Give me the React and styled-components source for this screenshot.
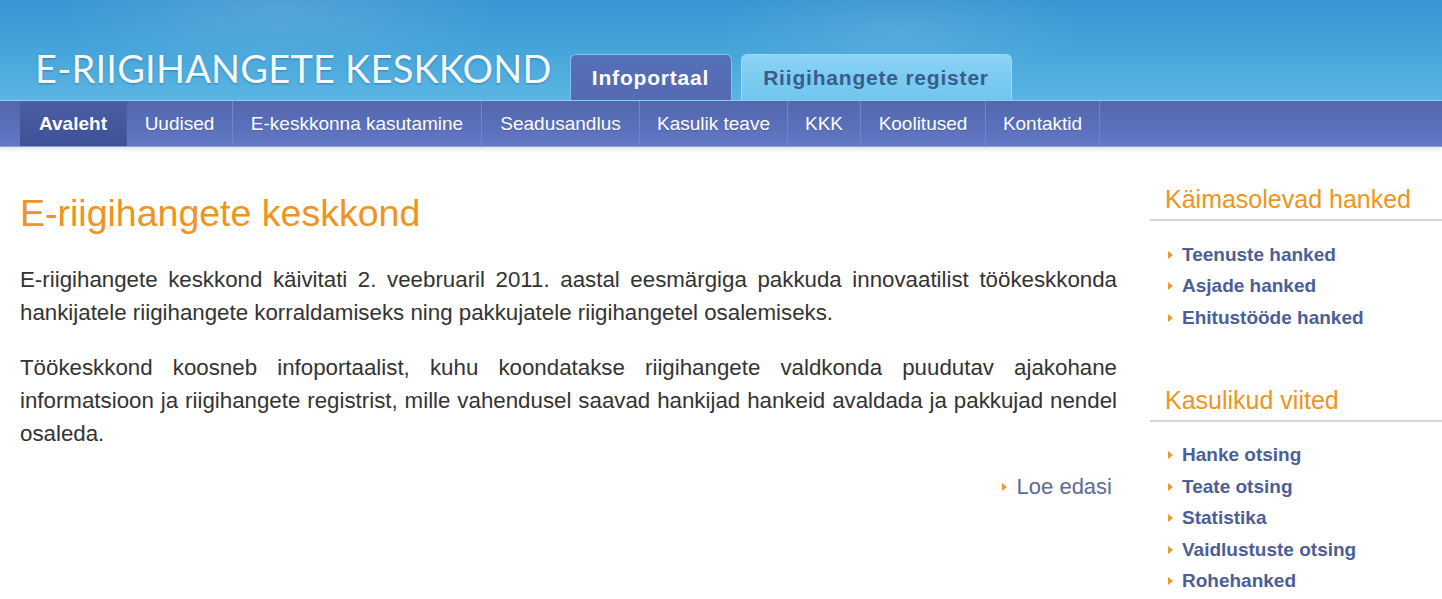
import React from 'react';
import styled, { createGlobalStyle } from 'styled-components';

const GlobalStyle = createGlobalStyle`
    html, body {
        margin: 0;
        padding: 0;
        background: #fff;
        font-family: "Liberation Sans", Arial, sans-serif;
    }
`;

const Page = styled.div`
    width: 1442px;
    height: 599px;
    overflow: hidden;
`;

const Header = styled.div`
    height: 100px;
    display: flex;
    align-items: flex-end;
    padding-left: 35px;
    background:
        radial-gradient(ellipse 320px 90px at 280px 10px, rgba(255,255,255,0.12), transparent 70%),
        radial-gradient(ellipse 260px 80px at 900px 30px, rgba(255,255,255,0.10), transparent 70%),
        linear-gradient(to bottom, #3a95d2 0%, #47a6db 55%, #5cb6e4 100%);
    border-bottom: 1px solid #8fd0f2;
`;

const Logo = styled.div`
    font-family: Lato, "Open Sans", sans-serif;
    font-size: 38px;
    color: #f4f9fd;
    letter-spacing: 0.2px;
    line-height: 1;
    padding-bottom: 13px;
    margin-right: 18px;
    text-shadow: 0 1px 2px rgba(0, 50, 100, 0.35);
    white-space: nowrap;
`;

const Tabs = styled.div`
    display: flex;
    gap: 9px;
    align-self: flex-end;
`;

const Tab = styled.div`
    height: 46px;
    box-sizing: border-box;
    display: flex;
    align-items: center;
    justify-content: center;
    font-size: 21px;
    font-weight: bold;
    letter-spacing: 0.8px;
    border-radius: 6px 6px 0 0;
    color: ${p => (p.active ? '#ffffff' : '#3b5b8c')};
    background: ${p => (p.active
        ? 'linear-gradient(to bottom, #5470b6, #5669b2)'
        : 'linear-gradient(to bottom, #8ad3f4, #70c5ee)')};
    border: 1px solid ${p => (p.active ? '#7fc4ec' : '#9ddaf6')};
    border-bottom: none;
    width: ${p => (p.active ? '162px' : '271px')};
`;

const Nav = styled.div`
    height: 45px;
    display: flex;
    padding-left: 20px;
    background: linear-gradient(to bottom, #5367ad 0%, #5a70bb 60%, #6379c6 100%);
    border-bottom: 1px solid #8a9bd4;
    box-shadow: 0 3px 4px rgba(120, 140, 160, 0.18);
`;

const NavItem = styled.div`
    display: flex;
    align-items: center;
    justify-content: center;
    width: ${p => p.w}px;
    box-sizing: border-box;
    font-size: 19px;
    font-weight: ${p => (p.active ? 'bold' : 'normal')};
    color: #fff;
    border-right: 1px solid ${p => (p.active ? '#4a5c9e' : '#7486c8')};
    background: ${p => (p.active ? 'linear-gradient(to bottom, #4a5ea6, #3f5196)' : 'transparent')};
    text-shadow: 0 1px 0 rgba(30, 40, 90, 0.25);
`;

const Body = styled.div`
    display: flex;
    padding-top: 40px;
`;

const Main = styled.div`
    width: 1097px;
    padding-left: 20px;
    flex-shrink: 0;
`;

const Title = styled.h1`
    margin: 0 0 24px;
    font-size: 37.5px;
    font-weight: normal;
    color: #ef9420;
    line-height: 52px;
`;

const Para = styled.p`
    margin: 0 0 21px;
    font-size: 22.3px;
    line-height: 33.3px;
    color: #333;
    text-align: justify;
`;

const MoreRow = styled.div`
    display: flex;
    justify-content: flex-end;
    padding-right: 5px;
    margin-top: 24px;
`;

const MoreLink = styled.a`
    display: flex;
    align-items: center;
    gap: 10px;
    font-size: 22px;
    color: #5d6a97;
    text-decoration: none;
`;

const Arrow = styled.span`
    width: 0;
    height: 0;
    border-top: 4px solid transparent;
    border-bottom: 4px solid transparent;
    border-left: 5px solid #e89a2c;
`;

const Side = styled.div`
    margin-left: 33px;
    flex: 1;
    margin-top: -4px;
`;

const SideTitle = styled.div`
    font-size: 25px;
    color: #ef9420;
    padding: 0 0 4px 15px;
    border-bottom: 2px solid #d6d6d6;
    line-height: 32px;
`;

const SideList = styled.div`
    display: flex;
    flex-direction: column;
    padding: 18px 0 0 18px;
    margin-bottom: 50px;
`;

const SideLink = styled.a`
    display: flex;
    align-items: center;
    gap: 9px;
    height: 31.5px;
    font-size: 19px;
    font-weight: bold;
    color: #4b5e98;
    text-decoration: none;
`;

const navItems = [
    ['Avaleht', true, 107],
    ['Uudised', false, 106],
    ['E-keskkonna kasutamine', false, 249],
    ['Seadusandlus', false, 158],
    ['Kasulik teave', false, 148],
    ['KKK', false, 73],
    ['Koolitused', false, 125],
    ['Kontaktid', false, 114],
];

const sections = [
    ['Käimasolevad hanked', ['Teenuste hanked', 'Asjade hanked', 'Ehitustööde hanked']],
    ['Kasulikud viited', ['Hanke otsing', 'Teate otsing', 'Statistika', 'Vaidlustuste otsing', 'Rohehanked']],
];

export default function App() {
    return (
        <Page>
            <GlobalStyle />
            <Header>
                <Logo>E-RIIGIHANGETE KESKKOND</Logo>
                <Tabs>
                    <Tab active>Infoportaal</Tab>
                    <Tab>Riigihangete register</Tab>
                </Tabs>
            </Header>
            <Nav>
                {navItems.map(([label, active, w]) => (
                    <NavItem key={label} active={active} w={w}>{label}</NavItem>
                ))}
            </Nav>
            <Body>
                <Main>
                    <Title>E-riigihangete keskkond</Title>
                    <Para>
                        E-riigihangete keskkond käivitati 2. veebruaril 2011. aastal eesmärgiga pakkuda innovaatilist töökeskkonda hankijatele riigihangete korraldamiseks ning pakkujatele riigihangetel osalemiseks.
                    </Para>
                    <Para>
                        Töökeskkond koosneb infoportaalist, kuhu koondatakse riigihangete valdkonda puudutav ajakohane informatsioon ja riigihangete registrist, mille vahendusel saavad hankijad hankeid avaldada ja pakkujad nendel osaleda.
                    </Para>
                    <MoreRow>
                        <MoreLink href="#"><Arrow />Loe edasi</MoreLink>
                    </MoreRow>
                </Main>
                <Side>
                    {sections.map(([title, links]) => (
                        <div key={title}>
                            <SideTitle>{title}</SideTitle>
                            <SideList>
                                {links.map(l => (
                                    <SideLink key={l} href="#"><Arrow />{l}</SideLink>
                                ))}
                            </SideList>
                        </div>
                    ))}
                </Side>
            </Body>
        </Page>
    );
}
